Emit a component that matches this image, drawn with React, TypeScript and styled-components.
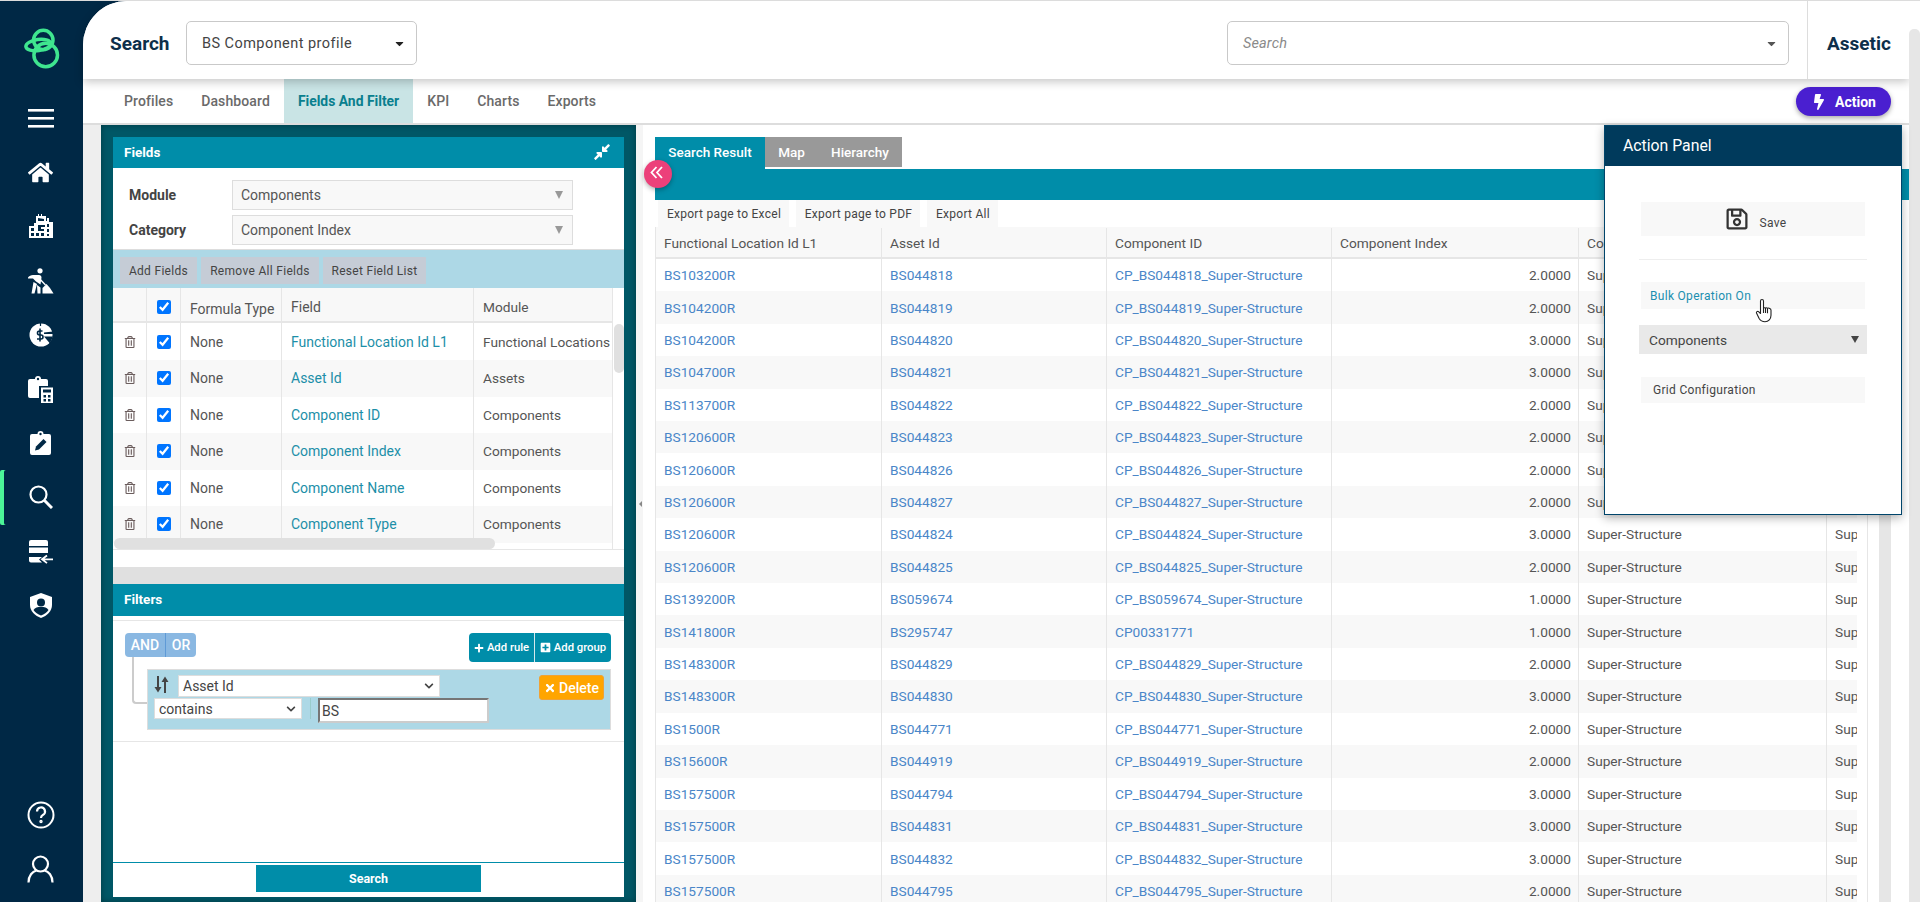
import React from "react";
import styled, { createGlobalStyle } from "styled-components";
import {
  FaBolt, FaHome, FaRegTrashAlt, FaRegSave, FaPlus, FaPlusSquare, FaTimes,
  FaCompressAlt, FaCaretDown, FaChevronDown,
} from "react-icons/fa";

const TEAL = "#008da9";
const NAVY = "#002845";
const LINE = "#e6e6e6";

const Global = createGlobalStyle`
  html, body { margin: 0; padding: 0; height: 902px; overflow: hidden; background: #fff; }
  body { font-family: Roboto, "Liberation Sans", sans-serif; color: #444; }
  * { box-sizing: border-box; }
`;

const Shell = styled.div`
  display: flex; width: 1920px; height: 902px; overflow: hidden;
  background: ${NAVY}; border-top: 1px solid #dcdcdc; position: relative;
`;
const Sidebar = styled.nav`
  width: 83px; flex: none; display: flex; flex-direction: column; height: 901px;
`;
const LogoBox = styled.div`
  height: 90px; display: flex; align-items: flex-start; justify-content: center; padding-top: 26px;
`;
const Slot = styled.div<{ $active?: boolean }>`
  height: 54.2px; display: flex; align-items: center; justify-content: center; color: #fff;
  box-shadow: ${(p) => (p.$active ? "inset 4px 0 0 #4cf598" : "none")};
  border-radius: 2px;
  padding-right: 2px;
`;
const BottomSlots = styled.div`
  margin-top: auto; padding-bottom: 6px;
`;
const Main = styled.div`
  flex: 1; min-width: 0; display: flex; flex-direction: column; height: 901px;
  background: #fff; border-top-left-radius: 44px; position: relative;
`;
const Header = styled.header`
  height: 78px; flex: none; display: flex; align-items: center; padding: 6px 0 0 27px;
  border-top-left-radius: 44px; background: #fff;
  box-shadow: 0 3px 10px rgba(0,0,0,.22); position: relative; z-index: 3; margin-right: 11px;
`;
const HeaderTitle = styled.h1`
  margin: 0 16.500px 0 0; font-size: 19px; font-weight: 700; color: #0d2f4a;
`;
const HeaderSelect = styled.div<{ $w: number; $ml?: number }>`
  width: ${(p) => p.$w}px; height: 44px; flex: none; margin-left: ${(p) => p.$ml || 0}px;
  border: 1px solid #c9c9c9; border-radius: 5px; background: #fff;
  display: flex; align-items: center; justify-content: space-between;
  padding: 0 10px 0 15px; font-size: 14.5px; color: #444; letter-spacing: .45px;
`;
const Placeholder = styled.span`
  font-style: italic; color: #8a8a8a; font-size: 14.5px; letter-spacing: .15px;
`;
const Brand = styled.div`
  margin: -6px 0 0 18px; height: 78px; flex: 1; border-left: 1px solid #ddd; display: flex;
  align-items: center; padding: 6px 0 0 19px; font-size: 19px; font-weight: 700; color: #0d2f4a;
`;
const NavRow = styled.div`
  height: 46px; flex: none; display: flex; align-items: stretch; padding-left: 27px;
  border-bottom: 2px solid #ddd; position: relative; margin-right: 11px; background: #fff;
`;
const NavTab = styled.a<{ $active?: boolean }>`
  display: flex; align-items: center; padding: 0 14px;
  font-size: ${(p) => (p.$active ? "13.900px" : "14px")};
  letter-spacing: ${(p) => (p.$active ? "0" : ".1px")};
  font-weight: ${(p) => (p.$active ? 700 : 500)};
  color: ${(p) => (p.$active ? "#0a7f8e" : "#6a6a6a")};
  background: ${(p) => (p.$active ? "#c9e4e5" : "transparent")};
`;
const ActionButton = styled.button`
  position: absolute; right: 18px; top: 8px; width: 95px; height: 29px; border: 0; border-radius: 15px;
  background: #4a1fd0; color: #fff; font: 700 14px Roboto, sans-serif; display: flex; align-items: center;
  justify-content: center; gap: 8px; box-shadow: 0 2px 5px rgba(0,0,0,.35);
`;
const Workspace = styled.div`
  flex: 1; min-height: 0; display: flex; background: #fff; margin-right: 11px;
`;
const Gutter = styled.div`
  width: 18px; flex: none; background: #eee;
`;
const LeftPanel = styled.section`
  width: 535px; flex: none; background: #005766; padding: 12px 12px 5px; display: flex;
  box-shadow: inset 0 0 6px rgba(0,0,0,.35);
`;
const Inner = styled.div`
  flex: 1; min-width: 0; background: #fff; display: flex; flex-direction: column;
`;
const PanelBar = styled.div<{ $h?: number }>`
  height: ${(p) => p.$h || 31}px; flex: none; background: ${TEAL}; color: #fff; font-size: 13.5px; font-weight: 700;
  display: flex; align-items: center; justify-content: space-between; padding: 0 13px 2px 11px;
`;
const FormArea = styled.div`
  height: 81px; flex: none; padding: 12px 0 0 16px; display: grid; grid-template-columns: 103px 341px;
  grid-auto-rows: 30px; row-gap: 5px; align-items: center;
`;
const FormLabel = styled.label`
  font-size: 14px; font-weight: 700; color: #444;
`;
const FormSelect = styled.div`
  height: 30px; border: 1px solid #ddd; background: #f8f8f8; font-size: 14px; color: #555;
  display: flex; align-items: center; justify-content: space-between; padding: 0 9px 0 8px;
`;
const DimCaret = styled.span`
  width: 0; height: 0; border-left: 4.5px solid transparent; border-right: 4.5px solid transparent;
  border-top: 8px solid #999;
`;
const ButtonBar = styled.div`
  height: 39px; flex: none; background: #add8e6; display: flex; gap: 4px; padding: 7px 0 0 7px;
  border-top: 1px solid #ddd;
`;
const GreyButton = styled.button<{ $w: number }>`
  width: ${(p) => p.$w}px; height: 27px; border: 0; background: #c5ccd6; color: #444;
  font: 400 12px Roboto, sans-serif; padding: 0; letter-spacing: .3px;
`;
const FieldTableWrap = styled.div`
  height: 262px; flex: none; position: relative; overflow: hidden; border-bottom: 1px solid ${LINE};
`;
const FieldRow = styled.div<{ $alt?: boolean; $head?: boolean; $h: number }>`
  display: grid; grid-template-columns: 34px 34px 101px 192px 138px;
  height: ${(p) => p.$h}px;
  background: ${(p) => (p.$alt || p.$head ? "#f8f8f8" : "#fff")};
  border-bottom: ${(p) => (p.$head ? `2px solid ${LINE}` : "0")};
  width: 499px;
`;
const FieldCell = styled.div<{ $center?: boolean; $dy?: number }>`
  display: flex; align-items: center; padding: ${(p) => p.$dy || 0}px ${(p) => (p.$center ? 0 : 9)}px 0;
  justify-content: ${(p) => (p.$center ? "center" : "flex-start")};
  border-right: 1px solid ${LINE}; font-size: 14px; color: #555; white-space: nowrap; overflow: hidden;
  &:last-child { border-right: 0; font-size: 13.700px; }
`;
const FieldLink = styled.a`
  color: #1c8fa8;
`;
const TickBox = styled.input.attrs({ type: "checkbox", checked: true, readOnly: true })`
  width: 14px; height: 14px; margin: 0; accent-color: #0075ff;
`;
const TrashIcon = styled(FaRegTrashAlt)`
  color: #6b5d5d; font-size: 12px;
`;
const VScrollSmall = styled.div`
  position: absolute; right: 0; top: 0; bottom: 0; width: 12px; background: #fff; border-left: 1px solid ${LINE};
`;
const VThumbSmall = styled.div`
  position: absolute; left: 1px; top: 36px; width: 10px; height: 49px; border-radius: 5px; background: #e0e0e0;
`;
const HThumbSmall = styled.div`
  position: absolute; left: 1px; bottom: 0; width: 381px; height: 11px; border-radius: 6px; background: #e0e0e0;
`;
const BlankBand = styled.div`
  height: 17px; flex: none;
`;
const GreyBand = styled.div`
  height: 17px; flex: none; background: #e0e0e0;
`;
const FilterBody = styled.div`
  flex: 1; min-height: 0; padding-top: 4px; display: flex; flex-direction: column;
`;
const RuleGroup = styled.div`
  height: 122px; flex: none; border-top: 1px solid ${LINE}; border-bottom: 1px solid ${LINE};
  padding: 12px 13px 0 12px; position: relative;
`;
const RuleTop = styled.div`
  display: flex; justify-content: space-between;
`;
const Conj = styled.div`
  display: flex; height: 24px; border-radius: 4px; overflow: hidden; background: #8ab8e2; color: #fff;
  font-size: 14px; font-weight: 500;
`;
const ConjBtn = styled.span<{ $w: number }>`
  width: ${(p) => p.$w}px; display: flex; align-items: center; justify-content: center;
  & + & { border-left: 1px solid #5f9ad6; }
`;
const AddGroup = styled.div`
  display: flex; height: 29px; border-radius: 4px; overflow: hidden; background: ${TEAL}; color: #fff;
  font-size: 11.300px; font-weight: 500;
`;
const AddBtn = styled.span<{ $w: number }>`
  width: ${(p) => p.$w}px; display: flex; align-items: center; justify-content: center; gap: 3px;
  & + & { border-left: 1px solid #d5e8ec; }
`;
const Connector = styled.div`
  position: absolute; left: 19px; top: 36px; width: 16px; height: 47px;
  border-left: 2px solid #ccc; border-bottom: 2px solid #ccc; border-bottom-left-radius: 4px;
`;
const RuleBox = styled.div`
  margin: 7px 0 0 22px; height: 61px; background: #add8e6; border: 1px solid #ddd; position: relative;
  padding: 5px 0 0 6px;
`;
const RuleLine = styled.div<{ $mt?: number }>`
  display: flex; align-items: flex-start; margin-top: ${(p) => p.$mt || 0}px;
`;
const SortGlyph = styled.svg`
  width: 15px; height: 17px; margin: 1px 9px 0 0; flex: none;
`;
const NativeLike = styled.div<{ $w: number; $h: number }>`
  width: ${(p) => p.$w}px; height: ${(p) => p.$h}px; background: #fff; border: 1px solid #ddd; font-size: 14px;
  color: #444; display: flex; align-items: center; justify-content: space-between; padding: 0 5px 0 4px;
`;
const Separator = styled.span`
  width: 1px; height: 21px; background: #9cc; margin: 0 7px 0 8px;
`;
const ValueInput = styled.div`
  width: 171px; height: 25px; background: #fff; border: 2px solid; border-color: #767676 #ccc #ccc #767676;
  font-size: 14px; color: #444; padding: 3px 2px; line-height: 17px;
`;
const DeleteBtn = styled.button`
  position: absolute; right: 6px; top: 5px; width: 65px; height: 25px; border: 1px solid #eea236; border-radius: 3px;
  background: #ffa500; color: #fff; font: 500 14px Roboto, sans-serif; display: flex; align-items: center;
  justify-content: center; gap: 3px; padding: 0;
`;
const FilterSpacer = styled.div`
  flex: 1;
`;
const SearchFooter = styled.div`
  height: 35px; flex: none; border-top: 1px solid ${TEAL}; display: flex; justify-content: center; padding: 2px 0 0 0;
`;
const SearchButton = styled.button`
  width: 225px; height: 27px; background: ${TEAL}; color: #fff; border: 0; font: 700 12.5px Roboto, sans-serif;
`;
const Divider = styled.div`
  width: 19px; flex: none; position: relative; display: flex;
`;
const DividerStrip = styled.div`
  width: 7px; background: #f5f5f5; position: relative;
`;
const DividerArrow = styled.span`
  position: absolute; left: 3px; top: 376px; width: 0; height: 0; border-top: 3px solid transparent;
  border-bottom: 3px solid transparent; border-right: 3px solid #888;
`;
const PinkToggle = styled.button`
  position: absolute; left: 8px; top: 35px; width: 28px; height: 28px; border-radius: 50%; border: 0; padding: 0 4px 3px 0;
  background: #ec407a; color: #fff; display: flex; align-items: center; justify-content: center; z-index: 2;
  box-shadow: 0 2px 5px rgba(0,0,0,.3);
`;
const Results = styled.section`
  flex: 1; min-width: 0; padding-top: 12px; display: flex; flex-direction: column;
`;
const TabRow = styled.div`
  display: flex; height: 32px; flex: none;
`;
const ResultTab = styled.div<{ $active?: boolean; $w: number }>`
  width: ${(p) => p.$w}px; height: ${(p) => (p.$active ? 32 : 30)}px; background: ${(p) => (p.$active ? TEAL : "#999")};
  color: #fff; font-size: 13.5px; font-weight: 500; display: flex; align-items: center; justify-content: center;
  padding-bottom: ${(p) => (p.$active ? 2 : 0)}px;
`;
const TealBand = styled.div`
  height: 31px; flex: none; background: ${TEAL}; margin-right: 0;
`;
const ExportRow = styled.div`
  height: 27px; flex: none; display: flex; gap: 7px; padding-left: 3px;
`;
const ExportBtn = styled.button<{ $w: number }>`
  width: ${(p) => p.$w}px; height: 27px; border: 0; background: #f8f8f8; color: #444;
  font: 400 12px Roboto, sans-serif; padding: 0 0 0 1px; letter-spacing: .27px;
`;
const TableArea = styled.div`
  flex: 1; min-height: 0; display: flex;
`;
const TableFrame = styled.div`
  width: 1213px; flex: none; border-right: 1px solid ${LINE}; border-left: 1px solid ${LINE};
`;
const TableClip = styled.div`
  width: 1201px; overflow: hidden;
`;
const GridRow = styled.div<{ $alt?: boolean; $head?: boolean }>`
  display: grid; grid-template-columns: 226px 225px 225px 247px 248px 60px; width: 1231px;
  height: ${(p) => (p.$head ? "32px" : "32.42px")};
  padding-top: ${(p) => (p.$head ? "1px" : "0")};
  background: ${(p) => (p.$alt || p.$head ? "#f8f8f8" : "#fff")};
  border-bottom: ${(p) => (p.$head ? `2px solid ${LINE}` : "0")};
`;
const GridCell = styled.div<{ $right?: boolean }>`
  display: flex; align-items: center; padding: 0 7px 0 8px; font-size: 13.700px; color: #555; white-space: nowrap;
  border-right: 1px solid ${LINE}; overflow: hidden;
  justify-content: ${(p) => (p.$right ? "flex-end" : "flex-start")};
`;
const GridLink = styled.a`
  color: #4a86c8;
`;
const TableScroll = styled.div`
  width: 12px; margin-left: 11px; flex: none; background: #e6e6e6;
`;
const PageScroll = styled.div`
  position: absolute; right: 0; top: 0; bottom: 0; width: 11px; background: #fff; padding-top: 28px; z-index: 4;
`;
const PageThumb = styled.div`
  height: 100%; background: #e6e6e6; border-radius: 5px 5px 0 0;
`;
const ActionPanel = styled.aside`
  position: absolute; left: 1521px; top: 124px; width: 298px; height: 390px; background: #fff;
  border: 1px solid #00456b; box-shadow: 0 3px 9px rgba(0,0,0,.3); z-index: 5; padding: 0 0 0 0;
`;
const ActionHead = styled.div`
  height: 40px; background: #003a5c; color: #fff; font-size: 15.800px; font-weight: 400; display: flex;
  align-items: center; padding: 0 0 2px 18px;
`;
const ActionBody = styled.div`
  padding: 36px 34px 0;
  display: flex; flex-direction: column;
`;
const SaveRow = styled.div`
  height: 34px; margin: 0 2px; background: #f8f8f8; display: flex; align-items: center; justify-content: center;
  gap: 11px; font-size: 12px; font-weight: 400; letter-spacing: .3px; color: #444; padding-left: 5px;
`;
const SaveLabel = styled.span`
  position: relative; top: 4px;
`;
const Rule = styled.div`
  height: 1px; background: #eee; margin: 23px 0 22px;
`;
const PanelItem = styled.div<{ $teal?: boolean; $pad: number; $h: number }>`
  height: ${(p) => p.$h}px; margin: 0 2px; background: #f8f8f8; display: flex; align-items: center;
  padding-left: ${(p) => p.$pad}px; font-size: 12px; font-weight: 400; letter-spacing: .3px;
  color: ${(p) => (p.$teal ? "#1b8fb0" : "#444")};
`;
const PanelSelect = styled.div`
  height: 29px; background: #e9e9e9; margin: 16px 0 23px; display: flex; align-items: center;
  justify-content: space-between; padding: 0 8px 0 10px; font-size: 13.700px; font-weight: 400; color: #444;
`;
const DarkCaret = styled.span`
  width: 0; height: 0; border-left: 4.5px solid transparent; border-right: 4.5px solid transparent;
  border-top: 7px solid #444;
`;
const HandCursor = styled.svg`
  position: absolute; left: 150px; top: 172px; width: 20px; height: 25px;
`;

const Logo = () => (
  <svg width="36" height="44" viewBox="0 0 36 44" fill="none" stroke="#3fe58f" strokeWidth="3.5">
    <circle cx="21.700" cy="28" r="11.800" />
    <circle cx="19.300" cy="13" r="9.700" />
    <ellipse cx="14.300" cy="18" rx="12.500" ry="5.500" transform="rotate(-8 14.300 18)" />
  </svg>
);
const DoubleLeft = () => (
  <svg width="13" height="13" viewBox="0 0 13 13" fill="none" stroke="#fff" strokeWidth="1.800">
    <path d="M6.500 1L1.500 6.500 6.500 12M12 1L7 6.500 12 12" />
  </svg>
);
const Hamburger = () => (
  <svg width="26" height="19" viewBox="0 0 26 19" fill="#fff"><rect width="26" height="2.600" y="0" /><rect width="26" height="2.600" y="8" /><rect width="26" height="2.600" y="16" /></svg>
);
const BuildingIcon = () => (
  <svg width="24" height="24" viewBox="0 0 24 24" fill="#fff" fillRule="evenodd">
    <path d="M0 12h5V9h2V2h2V0h1v2h2V0h1v2h4v5h1V4h2v4h4v16H0z M2 14v3h3v-3z M2 19v3h3v-3z M9 4v3h6V5z M9 9v2h7v2h-4v2h3v2H9z M18 10v3h2v-3z M18 15v3h2v-3z M7 19v3h3v-3z M12 19v3h3v-3z M18 20v2h2v-2z" />
  </svg>
);
const WorkerIcon = () => (
  <svg width="26" height="26" viewBox="0 0 26 26" fill="#fff">
    <circle cx="12" cy="2.800" r="2.600" />
    <path d="M0 9.500c1-1.500 3-2.500 5-2.500h6c1.500 0 2.500 1 2.500 2.500l-1 7L8 13.500 5 10.500 0 10.500z" />
    <path d="M5.500 14l3.500 2-2.500 9.500H3.500z M9 17l3.500 2.500v6H9.500z" />
    <path d="M8 8l9 9.500 1-1L9 7z" />
    <path d="M14.500 20l4-4 3.500 4 3.500 5.500H14.500z" />
  </svg>
);
const DollarPie = () => (
  <svg width="24" height="24" viewBox="0 0 24 24">
    <circle cx="12" cy="12" r="11.500" fill="#fff" />
    <path d="M11.500 0v3" stroke={NAVY} strokeWidth="1.200" />
    <path d="M15 9.500L24 8.500V11H15z M15 13.500H24L21 20.500z" fill={NAVY} />
    <path d="M13.500 8h-3a2 2 0 0 0 0 4h1.500a2 2 0 0 1 0 4H8M11 5.500v13" fill="none" stroke={NAVY} strokeWidth="1.600" />
  </svg>
);
const ClipCalc = () => (
  <svg width="25" height="27" viewBox="0 0 25 27">
    <path d="M2 3h5a3 3 0 0 1 6 0h5a2 2 0 0 1 2 2v5h-9v12H2a2 2 0 0 1-2-2V5a2 2 0 0 1 2-2z" fill="#fff" />
    <circle cx="10" cy="3" r="1.200" fill={NAVY} />
    <path d="M13 11.500h12V27H13z" fill="#fff" />
    <path d="M15 13.500h8v3h-8z M15.500 19h2.500v2.500h-2.500z M20 19h2.500v2.500H20z M15.500 23h2.500v2.500h-2.500z M20 23h2.500v2.500H20z" fill={NAVY} />
  </svg>
);
const ClipEdit = () => (
  <svg width="21" height="24" viewBox="0 0 21 24">
    <path d="M2 3h5.500a3 3 0 0 1 6 0H19a2 2 0 0 1 2 2v17a2 2 0 0 1-2 2H2a2 2 0 0 1-2-2V5a2 2 0 0 1 2-2z" fill="#fff" />
    <circle cx="10.500" cy="3" r="1.200" fill={NAVY} />
    <path d="M5 19.500l1-4 7.500-7.500 3 3-7.500 7.500z" fill={NAVY} />
  </svg>
);
const SearchGlyph = () => (
  <svg width="24" height="24" viewBox="0 0 24 24" fill="none" stroke="#fff"><circle cx="9.500" cy="9.500" r="8" strokeWidth="2.200" /><path d="M15.500 15.500L23 23" strokeWidth="3" /></svg>
);
const ServerArrow = () => (
  <svg width="24" height="24" viewBox="0 0 24 24" fill="#fff">
    <path d="M2 0h15a2 2 0 0 1 2 2v4H0V2a2 2 0 0 1 2-2z" />
    <path d="M0 7.500h19V13H0z" />
    <path d="M0 17h13l-3 2.500 3 3H2a2 2 0 0 1-2-2z" />
    <path d="M24 19.300H14M18 15.500l-5 3.800 5 3.800" fill="none" stroke="#fff" strokeWidth="1.800" />
  </svg>
);
const ShieldUser = () => (
  <svg width="22" height="25" viewBox="0 0 22 25">
    <path d="M11 0l11 4v8c0 6-5 11-11 13C5 23 0 18 0 12V4z" fill="#fff" />
    <circle cx="11" cy="9.500" r="4" fill={NAVY} />
    <path d="M3.500 17c1.500-2.500 4-3 7.500-3s6 .5 7.500 3c-1.500 2.500-4.500 4.500-7.500 5.500-3-1-6-3-7.500-5.500z" fill={NAVY} />
  </svg>
);
const HelpGlyph = () => (
  <svg width="28" height="28" viewBox="0 0 28 28" fill="none" stroke="#fff" strokeWidth="2"><circle cx="14" cy="14" r="12.500" /><path d="M10 10.500a4 4 0 1 1 5.800 3.500c-1.300.7-1.800 1.500-1.800 3" strokeWidth="2.200" /><circle cx="14" cy="20.500" r=".7" /></svg>
);
const UserGlyph = () => (
  <svg width="27" height="28" viewBox="0 0 27 28" fill="none" stroke="#fff" strokeWidth="2.200"><circle cx="13.500" cy="9" r="7.500" /><path d="M1.500 27.500c0-7 4-11 8-12M25.500 27.500c0-7-4-11-8-12" /></svg>
);

const fieldRows = [
  ["Functional Location Id L1", "Functional Locations", 37],
  ["Asset Id", "Assets", 36.500],
  ["Component ID", "Components", 36.500],
  ["Component Index", "Components", 36.500],
  ["Component Name", "Components", 36.500],
  ["Component Type", "Components", 36.500],
] as const;

const results: [string, string, string, string][] = [
  ["BS103200R", "BS044818", "CP_BS044818_Super-Structure", "2.0000"],
  ["BS104200R", "BS044819", "CP_BS044819_Super-Structure", "2.0000"],
  ["BS104200R", "BS044820", "CP_BS044820_Super-Structure", "3.0000"],
  ["BS104700R", "BS044821", "CP_BS044821_Super-Structure", "3.0000"],
  ["BS113700R", "BS044822", "CP_BS044822_Super-Structure", "2.0000"],
  ["BS120600R", "BS044823", "CP_BS044823_Super-Structure", "2.0000"],
  ["BS120600R", "BS044826", "CP_BS044826_Super-Structure", "2.0000"],
  ["BS120600R", "BS044827", "CP_BS044827_Super-Structure", "2.0000"],
  ["BS120600R", "BS044824", "CP_BS044824_Super-Structure", "3.0000"],
  ["BS120600R", "BS044825", "CP_BS044825_Super-Structure", "2.0000"],
  ["BS139200R", "BS059674", "CP_BS059674_Super-Structure", "1.0000"],
  ["BS141800R", "BS295747", "CP00331771", "1.0000"],
  ["BS148300R", "BS044829", "CP_BS044829_Super-Structure", "2.0000"],
  ["BS148300R", "BS044830", "CP_BS044830_Super-Structure", "3.0000"],
  ["BS1500R", "BS044771", "CP_BS044771_Super-Structure", "2.0000"],
  ["BS15600R", "BS044919", "CP_BS044919_Super-Structure", "2.0000"],
  ["BS157500R", "BS044794", "CP_BS044794_Super-Structure", "3.0000"],
  ["BS157500R", "BS044831", "CP_BS044831_Super-Structure", "3.0000"],
  ["BS157500R", "BS044832", "CP_BS044832_Super-Structure", "3.0000"],
  ["BS157500R", "BS044795", "CP_BS044795_Super-Structure", "2.0000"],
];

export default function App() {
  return (
    <>
      <Global />
      <Shell>
        <Sidebar>
          <LogoBox><Logo /></LogoBox>
          <Slot><Hamburger /></Slot>
          <Slot><FaHome size={25} /></Slot>
          <Slot><BuildingIcon /></Slot>
          <Slot><WorkerIcon /></Slot>
          <Slot><DollarPie /></Slot>
          <Slot><ClipCalc /></Slot>
          <Slot><ClipEdit /></Slot>
          <Slot $active><SearchGlyph /></Slot>
          <Slot><ServerArrow /></Slot>
          <Slot><ShieldUser /></Slot>
          <BottomSlots>
            <Slot><HelpGlyph /></Slot>
            <Slot><UserGlyph /></Slot>
          </BottomSlots>
        </Sidebar>
        <Main>
          <Header>
            <HeaderTitle>Search</HeaderTitle>
            <HeaderSelect $w={231}>BS Component profile <FaCaretDown size={13} color="#222" /></HeaderSelect>
            <HeaderSelect $w={562} $ml={810}><Placeholder>Search</Placeholder><FaCaretDown size={13} color="#555" /></HeaderSelect>
            <Brand>Assetic</Brand>
          </Header>
          <NavRow>
            <NavTab>Profiles</NavTab>
            <NavTab>Dashboard</NavTab>
            <NavTab $active>Fields And Filter</NavTab>
            <NavTab>KPI</NavTab>
            <NavTab>Charts</NavTab>
            <NavTab>Exports</NavTab>
            <ActionButton><FaBolt size={16} />Action</ActionButton>
          </NavRow>
          <Workspace>
            <Gutter />
            <LeftPanel>
              <Inner>
                <PanelBar>Fields <FaCompressAlt size={18} /></PanelBar>
                <FormArea>
                  <FormLabel>Module</FormLabel>
                  <FormSelect>Components <DimCaret /></FormSelect>
                  <FormLabel>Category</FormLabel>
                  <FormSelect>Component Index <DimCaret /></FormSelect>
                </FormArea>
                <ButtonBar>
                  <GreyButton $w={77}>Add Fields</GreyButton>
                  <GreyButton $w={118}>Remove All Fields</GreyButton>
                  <GreyButton $w={103}>Reset Field List</GreyButton>
                </ButtonBar>
                <FieldTableWrap>
                  <FieldRow $head $h={35}>
                    <FieldCell />
                    <FieldCell $center $dy={4}><TickBox /></FieldCell>
                    <FieldCell $dy={9}>Formula Type</FieldCell>
                    <FieldCell $dy={4}>Field</FieldCell>
                    <FieldCell $dy={4}>Module</FieldCell>
                  </FieldRow>
                  {fieldRows.map(([f, m, h], i) => (
                    <FieldRow key={f} $alt={i % 2 === 1} $h={h}>
                      <FieldCell $center><TrashIcon /></FieldCell>
                      <FieldCell $center><TickBox /></FieldCell>
                      <FieldCell>None</FieldCell>
                      <FieldCell><FieldLink>{f}</FieldLink></FieldCell>
                      <FieldCell>{m}</FieldCell>
                    </FieldRow>
                  ))}
                  <VScrollSmall><VThumbSmall /></VScrollSmall>
                  <HThumbSmall />
                </FieldTableWrap>
                <BlankBand />
                <GreyBand />
                <PanelBar $h={32}>Filters</PanelBar>
                <FilterBody>
                  <RuleGroup>
                    <RuleTop>
                      <Conj><ConjBtn $w={40}>AND</ConjBtn><ConjBtn $w={31}>OR</ConjBtn></Conj>
                      <AddGroup>
                        <AddBtn $w={65}><FaPlus size={10} />Add rule</AddBtn>
                        <AddBtn $w={77}><FaPlusSquare size={11} />Add group</AddBtn>
                      </AddGroup>
                    </RuleTop>
                    <Connector />
                    <RuleBox>
                      <RuleLine>
                        <SortGlyph viewBox="0 0 15 17" fill="#444">
                          <path d="M3 0h2v11h2.500L4 16.500.5 11H3z M10 17h2V6h2.500L11 .5 7.500 6H10z" />
                        </SortGlyph>
                        <NativeLike $w={262} $h={22}>Asset Id <FaChevronDown size={10} /></NativeLike>
                      </RuleLine>
                      <RuleLine $mt={1}>
                        <NativeLike $w={148} $h={21}>contains <FaChevronDown size={10} /></NativeLike>
                        <Separator />
                        <ValueInput>BS</ValueInput>
                      </RuleLine>
                      <DeleteBtn><FaTimes size={12} />Delete</DeleteBtn>
                    </RuleBox>
                  </RuleGroup>
                  <FilterSpacer />
                  <SearchFooter><SearchButton>Search</SearchButton></SearchFooter>
                </FilterBody>
              </Inner>
            </LeftPanel>
            <Divider>
              <DividerStrip><DividerArrow /></DividerStrip>
              <PinkToggle><DoubleLeft /></PinkToggle>
            </Divider>
            <Results>
              <TabRow>
                <ResultTab $active $w={110}>Search Result</ResultTab>
                <ResultTab $w={53}>Map</ResultTab>
                <ResultTab $w={84}>Hierarchy</ResultTab>
              </TabRow>
              <TealBand />
              <ExportRow>
                <ExportBtn $w={131}>Export page to Excel</ExportBtn>
                <ExportBtn $w={124}>Export page to PDF</ExportBtn>
                <ExportBtn $w={71}>Export All</ExportBtn>
              </ExportRow>
              <TableArea>
                <TableFrame>
                  <TableClip>
                    <GridRow $head>
                      <GridCell>Functional Location Id L1</GridCell>
                      <GridCell>Asset Id</GridCell>
                      <GridCell>Component ID</GridCell>
                      <GridCell>Component Index</GridCell>
                      <GridCell>Component Name</GridCell>
                      <GridCell>Component Type</GridCell>
                    </GridRow>
                    {results.map((r, i) => (
                      <GridRow key={r[1]} $alt={i % 2 === 1}>
                        <GridCell><GridLink>{r[0]}</GridLink></GridCell>
                        <GridCell><GridLink>{r[1]}</GridLink></GridCell>
                        <GridCell><GridLink>{r[2]}</GridLink></GridCell>
                        <GridCell $right>{r[3]}</GridCell>
                        <GridCell>Super-Structure</GridCell>
                        <GridCell>Super-Structure</GridCell>
                      </GridRow>
                    ))}
                  </TableClip>
                </TableFrame>
                <TableScroll />
              </TableArea>
            </Results>
          </Workspace>
          <PageScroll><PageThumb /></PageScroll>
          <ActionPanel>
            <ActionHead>Action Panel</ActionHead>
            <ActionBody>
              <SaveRow><FaRegSave size={24} color="#333" /><SaveLabel>Save</SaveLabel></SaveRow>
              <Rule />
              <PanelItem $teal $pad={9} $h={27}>Bulk Operation On</PanelItem>
              <PanelSelect>Components <DarkCaret /></PanelSelect>
              <PanelItem $pad={12} $h={26}>Grid Configuration</PanelItem>
            </ActionBody>
            <HandCursor viewBox="0 0 20 25" fill="#fff" stroke="#222" strokeWidth="1.100" strokeLinejoin="round">
              <path d="M7 1.500c1 0 1.500.7 1.500 1.500v7c1-.3 1.500-.3 2 0 .6-.3 1.200-.3 2 .2.800-.3 1.500-.2 2.200.3.800.300 1.300.8 1.300 1.700v5c0 3.500-2.500 6.500-6 6.500-3 0-4.500-1-6-3.500L1.500 15c-.5-1 1-2.200 2-1.300L5.500 15.500V3c0-.8.500-1.500 1.500-1.500z" />
              <path d="M8.500 10v5M10.500 10v5M12.500 10.200v5" fill="none" />
            </HandCursor>
          </ActionPanel>
        </Main>
      </Shell>
    </>
  );
}
